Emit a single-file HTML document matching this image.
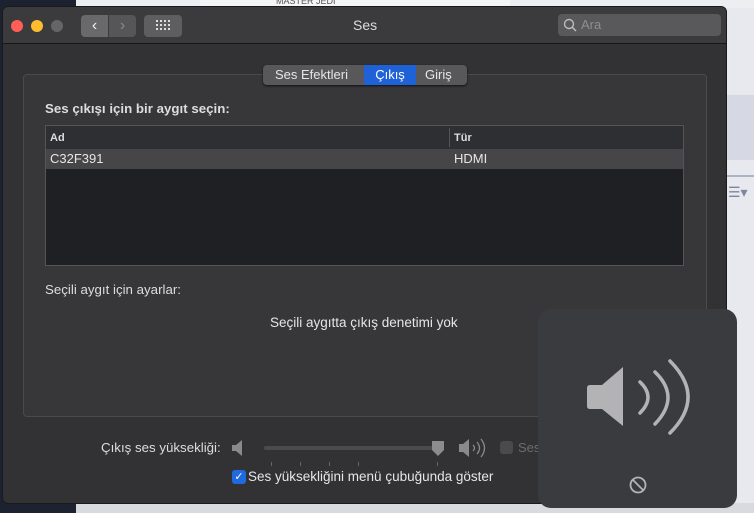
<!DOCTYPE html>
<html><head><meta charset="utf-8"><style>
*{margin:0;padding:0;box-sizing:border-box}
body{width:754px;height:513px;overflow:hidden;position:relative;background:#e8e9ee;font-family:"Liberation Sans",sans-serif;color:#e0e0e0}
.abs{position:absolute;white-space:nowrap}
</style></head><body>
<div class="abs" style="left:0;top:0;width:76px;height:513px;background:#1c2230"></div>
<div class="abs" style="left:76px;top:0;width:680px;height:8px;background:#eceef2"></div>
<div class="abs" style="left:200px;top:0;width:310px;height:8px;background:#f4f5f7;font-size:9px;color:#555;padding-left:76px;line-height:2px">MASTER JEDI</div>
<div class="abs" style="left:727px;top:95px;width:27px;height:65px;background:#d6d9e3"></div>
<div class="abs" style="left:727px;top:175px;width:27px;height:2px;background:#aab3c8"></div>
<div class="abs" style="left:728px;top:184px;font-size:14px;color:#7a86a0">☰▾</div>
<div class="abs" style="left:76px;top:503px;width:680px;height:10px;background:#d8dadf"></div>
<!-- window -->
<div class="abs" style="left:2px;top:6px;width:725px;height:498px;background:#323235;border-radius:6px;border:1px solid #1a1a1a;overflow:hidden">
 <div class="abs" style="left:0;top:0;width:725px;height:37px;background:#3b3b3e;border-bottom:1px solid #161616"></div>
 <div class="abs" style="left:8px;top:13px;width:12px;height:12px;border-radius:6px;background:#fe5f57"></div>
 <div class="abs" style="left:28px;top:13px;width:12px;height:12px;border-radius:6px;background:#febc2e"></div>
 <div class="abs" style="left:48px;top:13px;width:12px;height:12px;border-radius:6px;background:#656567"></div>
 <div class="abs" style="left:78px;top:8px;width:27px;height:22px;border-radius:4px 0 0 4px;background:#69696c;color:#eee;font-size:16px;text-align:center;line-height:21px">&#x2039;</div>
 <div class="abs" style="left:106px;top:8px;width:27px;height:22px;border-radius:0 4px 4px 0;background:#565659;color:#8a8a8a;font-size:16px;text-align:center;line-height:21px">&#x203A;</div>
 <div class="abs" style="left:141px;top:8px;width:38px;height:22px;border-radius:4px;background:#5e5e61"></div>
 <svg class="abs" style="left:153px;top:12px" width="14" height="14"><g fill="#ddd"><rect x="0" y="1" width="2" height="2"/><rect x="4" y="1" width="2" height="2"/><rect x="8" y="1" width="2" height="2"/><rect x="12" y="1" width="2" height="2"/><rect x="0" y="5" width="2" height="2"/><rect x="4" y="5" width="2" height="2"/><rect x="8" y="5" width="2" height="2"/><rect x="12" y="5" width="2" height="2"/><rect x="0" y="9" width="2" height="2"/><rect x="4" y="9" width="2" height="2"/><rect x="8" y="9" width="2" height="2"/><rect x="12" y="9" width="2" height="2"/></g></svg>
 <div class="abs" style="left:350px;top:10px;font-size:14px;color:#ddd">Ses</div>
 <div class="abs" style="left:555px;top:7px;width:163px;height:22px;border-radius:4px;background:#59595c"></div>
 <svg class="abs" style="left:560px;top:11px" width="14" height="14"><circle cx="6" cy="6" r="4.5" stroke="#bbb" stroke-width="1.4" fill="none"/><path d="M9.3 9.3L13 13" stroke="#bbb" stroke-width="1.5"/></svg>
 <div class="abs" style="left:578px;top:10px;font-size:13px;color:#8e8e90">Ara</div>
 <!-- panel -->
 <div class="abs" style="left:20px;top:67px;width:684px;height:343px;border:1px solid #4a4a4d;border-radius:4px;background:#37373a"></div>
 <div class="abs" style="left:260px;top:58px;width:204px;height:20px;border-radius:4px;background:#58585b;box-shadow:0 1px 2px #111;font-size:13px;line-height:20px;color:#e6e6e6">
  <span class="abs" style="left:12px">Ses Efektleri</span>
  <span class="abs" style="left:101px;width:52px;height:20px;background:#1f62d8;color:#fff;text-align:center">Çıkış</span>
  <span class="abs" style="left:162px">Giriş</span>
 </div>
 <div class="abs" style="left:42px;top:94px;font-size:13.3px;font-weight:bold;color:#ddd">Ses çıkışı için bir aygıt seçin:</div>
 <div class="abs" style="left:42px;top:118px;width:639px;height:141px;border:1px solid #555;background:#1f2023">
  <div class="abs" style="left:0;top:0;width:637px;height:23px;background:#2e2f32"></div>
  <div class="abs" style="left:403px;top:2px;width:1px;height:19px;background:#555"></div>
  <div class="abs" style="left:4px;top:6px;font-size:11px;font-weight:bold;color:#ddd">Ad</div>
  <div class="abs" style="left:408px;top:6px;font-size:11px;font-weight:bold;color:#ddd">Tür</div>
  <div class="abs" style="left:0;top:23px;width:637px;height:20px;background:#464649"></div>
  <div class="abs" style="left:4px;top:25px;font-size:13px;color:#e6e6e6">C32F391</div>
  <div class="abs" style="left:408px;top:25px;font-size:13px;color:#e6e6e6">HDMI</div>
 </div>
 <div class="abs" style="left:42px;top:275px;font-size:13.3px;color:#ddd">Seçili aygıt için ayarlar:</div>
 <div class="abs" style="left:267px;top:308px;font-size:13.5px;color:#e6e6e6">Seçili aygıtta çıkış denetimi yok</div>
 <div class="abs" style="left:98px;top:433px;font-size:13.3px;color:#ddd">Çıkış ses yüksekliği:</div>
 <svg class="abs" style="left:228px;top:432px" width="14" height="18"><path d="M1 6h4l6-5v16l-6-5H1z" fill="#8a8a8c"/></svg>
 <div class="abs" style="left:261px;top:439px;width:180px;height:4px;border-radius:2px;background:#4b4b4e"></div>
 <div class="abs" style="left:268px;top:455px;width:1px;height:4px;background:#666"></div>
 <div class="abs" style="left:297px;top:455px;width:1px;height:4px;background:#666"></div>
 <div class="abs" style="left:326px;top:455px;width:1px;height:4px;background:#666"></div>
 <div class="abs" style="left:355px;top:455px;width:1px;height:4px;background:#666"></div>
 <div class="abs" style="left:434px;top:455px;width:1px;height:4px;background:#666"></div>
 <svg class="abs" style="left:428px;top:433px" width="14" height="20"><path d="M1 1h12v9l-6 6-6-6z" fill="#8c8c8e"/></svg>
 <svg class="abs" style="left:455px;top:430px" width="36" height="22"><path d="M1 7h4l6-5v18l-6-5H1z" fill="#8a8a8c"/><path d="M15 8q3 3 0 6M19 5q5 6 0 12M23 2q7 9 0 18" stroke="#8a8a8c" stroke-width="1.3" fill="none"/></svg>
 <div class="abs" style="left:497px;top:434px;width:13px;height:13px;border-radius:3px;background:#4a4a4d"></div>
 <div class="abs" style="left:515px;top:433px;font-size:13px;color:#6d6d70">Ses</div>
 <div class="abs" style="left:229px;top:463px;width:14px;height:14px;border-radius:3px;background:#1f6ae0;color:#fff;font-size:11px;line-height:14px;text-align:center">✓</div>
 <div class="abs" style="left:245px;top:462px;font-size:13.5px;color:#e6e6e6">Ses yüksekliğini menü çubuğunda göster</div>
</div>
<!-- HUD -->
<div class="abs" style="left:538px;top:309px;width:199px;height:199px;border-radius:13px;background:#3a3b3e"></div>
<svg class="abs" style="left:580px;top:355px" width="120" height="90"><path d="M10 30q-3 0-3 3v18q0 3 3 3h12l21 17V12L22 30z" fill="#b3b3b6"/><g stroke="#b3b3b6" stroke-width="3.5" fill="none" stroke-linecap="round"><path d="M60 27Q76 42 60 58"/><path d="M75 17Q101 42 75 69"/><path d="M90 6Q126 42 90 78"/></g></svg>
<svg class="abs" style="left:628px;top:475px" width="20" height="20"><circle cx="10" cy="10" r="7.5" stroke="#b3b3b6" stroke-width="1.8" fill="none"/><path d="M5 5l10 10" stroke="#b3b3b6" stroke-width="1.8"/></svg>
</body></html>
